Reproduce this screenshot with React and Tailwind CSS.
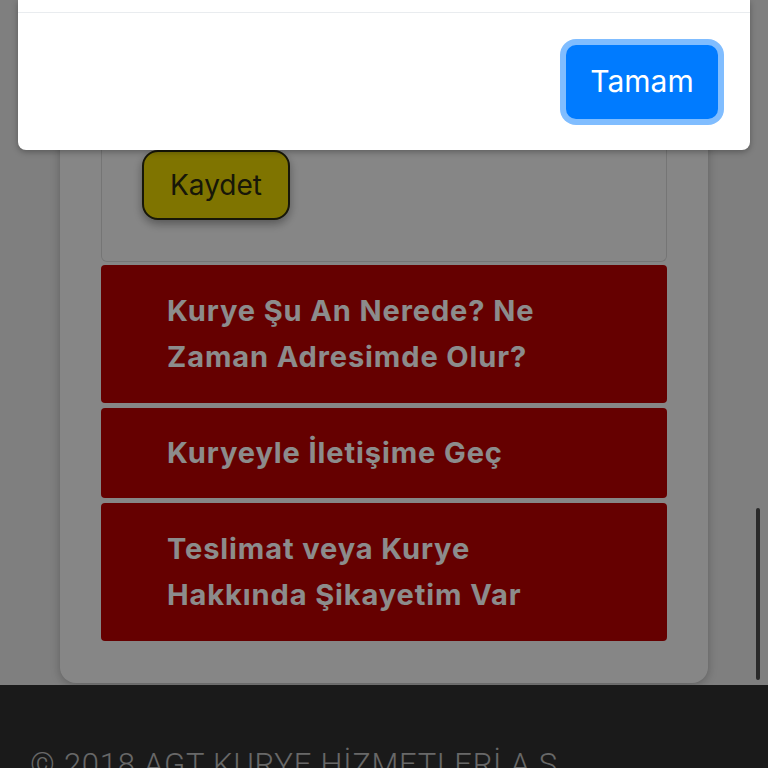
import { useState } from 'react';

const actions = [
    ['Kurye Şu An Nerede? Ne', 'Zaman Adresimde Olur?'],
    ['Kuryeyle İletişime Geç'],
    ['Teslimat veya Kurye', 'Hakkında Şikayetim Var'],
];

export default function App() {
    const [open, setOpen] = useState(true);

    return (
        <div className="relative h-[768px] overflow-hidden bg-[#e7e7e7]" style={{ fontFamily: 'Inter, "Noto Sans", sans-serif' }}>
            {/* sayfa içeriği */}
            <div className="ml-[60px] w-[648px] rounded-b-2xl bg-[#f5f5f5] px-[41px] pb-[42px] shadow-[0_2px_10px_rgba(0,0,0,0.25)]">
                <div className="h-[262px] rounded-b-md border border-t-0 border-[#d6d6d6] px-[40px] pt-[150px]">
                    <button className="h-[70px] w-[148px] rounded-2xl border-2 border-[#2a2a10] bg-[#e7d300] text-[28px] text-[#2b2b10] shadow-[0_4px_10px_rgba(0,0,0,0.35)]">
                        Kaydet
                    </button>
                </div>
                <div className="mt-[3px] flex flex-col gap-[5px]">
                    {actions.map(lines => (
                        <div key={lines[0]} className={`rounded-sm bg-[#b90000] pl-[66px] ${lines.length > 1 ? 'py-[23px]' : 'py-[22px]'}`}>
                            {lines.map(l => (
                                <p key={l} className="text-[29px] font-bold leading-[46px] tracking-[0.9px] text-white">{l}</p>
                            ))}
                        </div>
                    ))}
                </div>
            </div>

            <footer className="mt-[2px] h-[200px] bg-[#313131] pl-[30px] pt-[64px]">
                <p className="text-[31px] font-light leading-none tracking-wide whitespace-nowrap text-[#bdbdbd]" style={{ fontFamily: 'Roboto, sans-serif' }}>
                    © 2018 AGT KURYE HİZMETLERİ A.Ş.
                </p>
            </footer>

            {/* modal arka planı */}
            {open && <div className="absolute inset-0 bg-black/[0.45]" />}

            {/* kaydırma çubuğu */}
            <div className="absolute left-[756px] top-[508px] h-[172px] w-[4px] rounded-full bg-[#2a2a2a]" />

            {open && (
                <div className="absolute left-[18px] top-0 w-[732px] rounded-b-lg bg-white shadow-[0_2px_6px_rgba(0,0,0,0.3)]">
                    <div className="h-[13px] border-b border-[#e9ecef]" />
                    <div className="flex h-[137px] items-center justify-end pr-[32px]">
                        <button
                            onClick={() => setOpen(false)}
                            className="h-[74px] w-[152px] rounded-[10px] bg-[#007bff] text-[30px] text-white ring-[6px] ring-[#80bdff]"
                        >
                            Tamam
                        </button>
                    </div>
                </div>
            )}
        </div>
    );
}
